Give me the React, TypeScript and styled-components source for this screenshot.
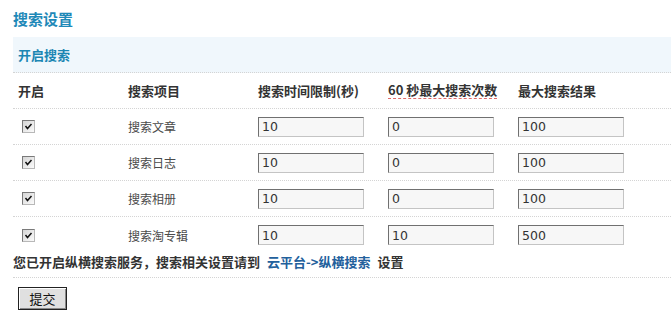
import styled, { createGlobalStyle } from 'styled-components'

const GlobalStyle = createGlobalStyle`
  body {
    margin: 0;
    background: #fff;
    font-family: 'Noto Sans CJK SC', 'DejaVu Sans', sans-serif;
    color: #333;
  }
`

const items = [
  { name: '搜索文章', time: '10', count: '0', max: '100' },
  { name: '搜索日志', time: '10', count: '0', max: '100' },
  { name: '搜索相册', time: '10', count: '0', max: '100' },
  { name: '搜索淘专辑', time: '10', count: '10', max: '500' },
]

function CheckBox() {
  return (
    <Check>
      <svg width="9" height="9" viewBox="0 0 9 9">
        <path d="M1.5 4 L3.5 6.5 L7.5 2" fill="none" stroke="#111" strokeWidth="1.5" />
      </svg>
    </Check>
  )
}

function App() {
  return (
    <Page>
      <GlobalStyle />
      <Title>搜索设置</Title>
      <Band>开启搜索</Band>
      <Row $head>
        <Cell>开启</Cell>
        <Cell>搜索项目</Cell>
        <Cell>搜索时间限制(秒)</Cell>
        <Cell>
          <Hint>60 秒最大搜索次数</Hint>
        </Cell>
        <Cell>最大搜索结果</Cell>
      </Row>
      {items.map((it, i) => (
        <Row key={it.name} $last={i === items.length - 1}>
          <Cell>
            <CheckBox />
          </Cell>
          <Cell>{it.name}</Cell>
          <Cell>
            <Field defaultValue={it.time} />
          </Cell>
          <Cell>
            <Field defaultValue={it.count} />
          </Cell>
          <Cell>
            <Field defaultValue={it.max} />
          </Cell>
        </Row>
      ))}
      <Notice>
        您已开启纵横搜索服务，搜索相关设置请到 <Link href="#">云平台-&gt;纵横搜索</Link> 设置
      </Notice>
      <Submit type="button">提交</Submit>
    </Page>
  )
}

const Page = styled.div`
  padding: 0 0 0 13px;
`

const Title = styled.h1`
  margin: 0;
  height: 37px;
  line-height: 37px;
  font-size: 15px;
  font-weight: bold;
  color: #1f89b8;
`

const Band = styled.div`
  height: 35px;
  line-height: 35px;
  padding-left: 5px;
  background: #f0f7fc;
  border-bottom: 1px dotted #d4d4d4;
  font-size: 13px;
  font-weight: bold;
  color: #1c86b3;
`

const Row = styled.div<{ $head?: boolean; $last?: boolean }>`
  display: grid;
  grid-template-columns: 110px 130px 130px 130px 1fr;
  align-items: center;
  box-sizing: border-box;
  height: 36px;
  border-bottom: ${(p) => (p.$last ? 'none' : '1px dotted #d4d4d4')};
  font-size: ${(p) => (p.$head ? '13px' : '12px')};
  font-weight: ${(p) => (p.$head ? 'bold' : 'normal')};
  color: ${(p) => (p.$head ? '#333' : '#4a4a4a')};
`

const Cell = styled.div`
  display: flex;
  align-items: center;
  padding-left: 5px;
`

const Hint = styled.span`
  border-bottom: 1px dashed #e06a6a;
  line-height: 16px;
`

const Check = styled.span`
  display: inline-flex;
  align-items: center;
  justify-content: center;
  box-sizing: border-box;
  width: 13px;
  height: 13px;
  margin-left: 4px;
  border: 1px solid #7a7a7a;
  border-right-color: #b8b8b8;
  border-bottom-color: #b8b8b8;
  background: linear-gradient(135deg, #d6d6d6, #fbfbfb);
`

const Field = styled.input`
  box-sizing: border-box;
  width: 106px;
  height: 20px;
  padding: 0 3px;
  border: 1px solid #c4c4c4;
  border-top-color: #707070;
  border-left-color: #707070;
  background: #f7f7f7;
  font-family: 'DejaVu Sans', sans-serif;
  font-size: 12.5px;
  color: #333;
  outline: none;
`

const Notice = styled.div`
  height: 24px;
  line-height: 18px;
  border-bottom: 1px dotted #d4d4d4;
  font-size: 13px;
  font-weight: bold;
  color: #333;
`

const Link = styled.a`
  margin: 0 4px;
  color: #22609c;
  text-decoration: none;
`

const Submit = styled.button`
  display: block;
  margin: 9px 0 0 5px;
  width: 49px;
  height: 23px;
  padding: 0;
  border: 1px solid #222;
  background: #e0e0e0;
  box-shadow: inset 1px 1px #fff, inset -1px -1px #888;
  font-family: 'Noto Sans CJK SC', sans-serif;
  font-size: 13px;
  color: #111;
`

export default App
